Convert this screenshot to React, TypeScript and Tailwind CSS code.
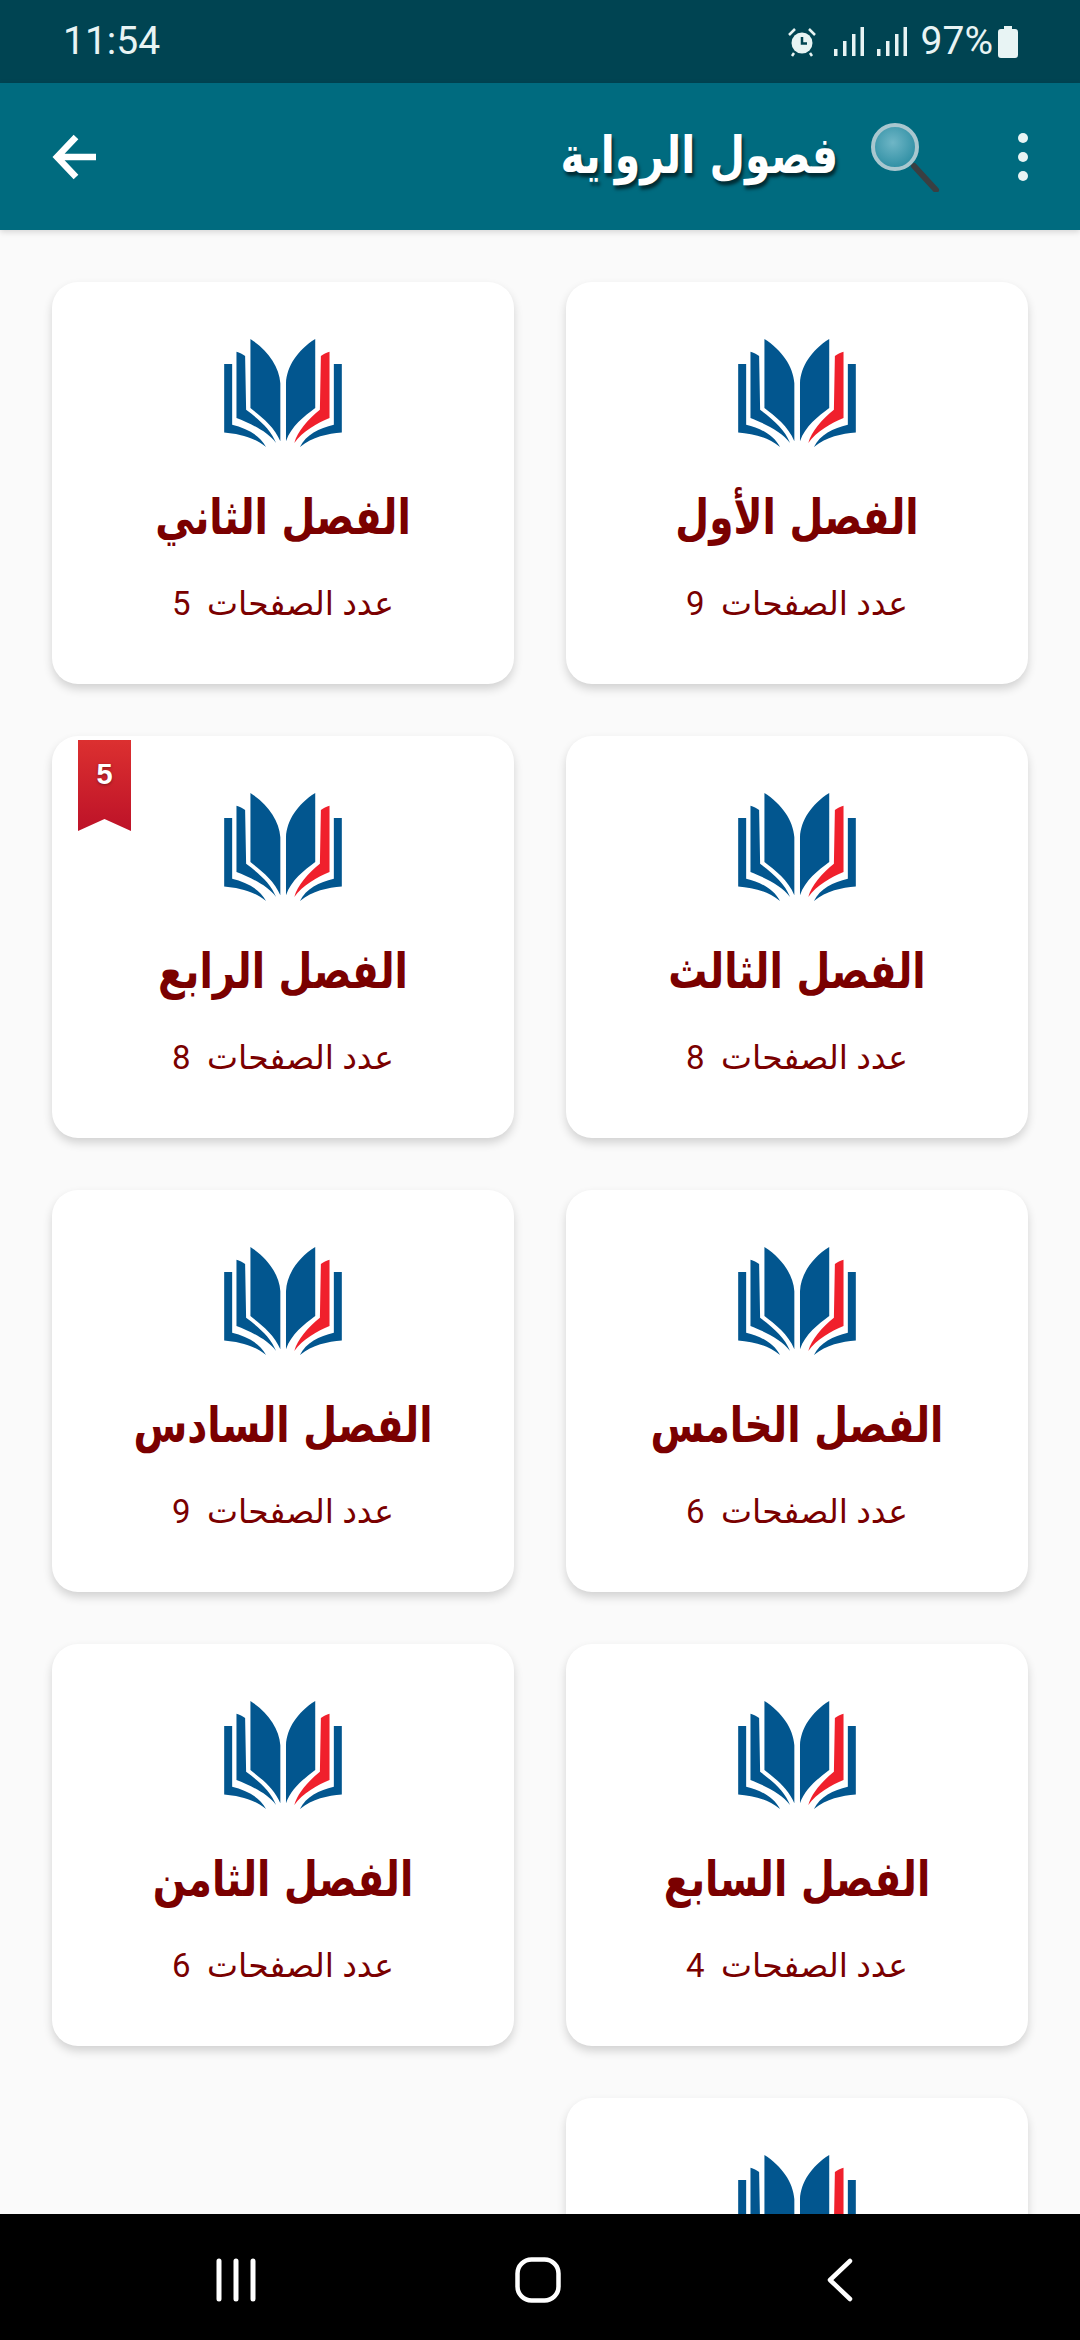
const chapters = [
  { title: "الفصل الأول", pages: 9 },
  { title: "الفصل الثاني", pages: 5 },
  { title: "الفصل الثالث", pages: 8 },
  { title: "الفصل الرابع", pages: 8, mark: 5 },
  { title: "الفصل الخامس", pages: 6 },
  { title: "الفصل السادس", pages: 9 },
  { title: "الفصل السابع", pages: 4 },
  { title: "الفصل الثامن", pages: 6 },
  { title: "الفصل التاسع", pages: 7 },
];

function BookLogo() {
  return (
    <svg viewBox="84 57 354 325" className="h-[108px] w-[118px]" fill="#02568f">
      <path d="M163 57C215 90 250 140 253 190L253 365C235 320 195 290 163 265Z" />
      <path d="M358 57C305 90 272 140 270 190L270 365C285 320 325 290 358 265Z" />
      <path d="M121 95C130 97 140 102 147 108L150 270C190 300 225 330 240 370C215 335 160 310 121 295Z" />
      <path d="M401 95C392 97 382 102 375 108L372 270C335 300 305 335 295 370C320 335 365 310 401 295Z" fill="#f0202c" />
      <path d="M84 132L108 132L108 315C150 325 190 345 210 382C170 350 125 342 84 338Z" />
      <path d="M438 132L414 132L414 315C370 325 330 345 312 382C350 350 395 342 438 338Z" />
    </svg>
  );
}

function Ribbon({ value }: { value: number }) {
  return (
    <div className="absolute left-[26px] top-[4px] h-[91px] w-[53px]">
      <svg viewBox="0 0 53 91" className="absolute inset-0 h-full w-full">
        <defs>
          <linearGradient id="ribbon" x1="0" y1="0" x2="0" y2="1">
            <stop offset="0" stopColor="#dc3030" />
            <stop offset="1" stopColor="#bd1228" />
          </linearGradient>
        </defs>
        <path d="M0 0H53V91L26.5 79L0 91Z" fill="url(#ribbon)" />
      </svg>
      <span className="absolute inset-x-0 top-[16px] text-center font-['Liberation_Sans',sans-serif] text-[29px] font-bold leading-[36px] text-white [text-shadow:0_1px_3px_rgba(0,0,0,0.4)]">
        {value}
      </span>
    </div>
  );
}

function ChapterCard({ title, pages, mark }: { title: string; pages: number; mark?: number }) {
  return (
    <div className="relative flex h-[402px] flex-col items-center rounded-[26px] bg-white pt-[57px] shadow-[0_5px_10px_rgba(0,0,0,0.16)]">
      {mark ? <Ribbon value={mark} /> : null}
      <BookLogo />
      <div className="mt-[35px] h-[72px] origin-center scale-y-125 whitespace-nowrap font-['DejaVu_Sans',sans-serif] text-[39px] font-bold leading-[72px] text-[#7a0000]">
        {title}
      </div>
      <div className="mt-[30px] whitespace-pre font-['Roboto','DejaVu_Sans',sans-serif] text-[33px] leading-[40px] text-[#7a0000]">
        {"عدد الصفحات  " + pages}
      </div>
    </div>
  );
}

function SignalBars({ className }: { className: string }) {
  return (
    <svg viewBox="0 0 30 30" className={className} fill="#e8f4f4">
      <rect x="0" y="22" width="3.5" height="7" />
      <rect x="9" y="14" width="3.5" height="15" />
      <rect x="18" y="7" width="3.5" height="22" />
      <rect x="26.5" y="0" width="3.5" height="29" />
    </svg>
  );
}

function StatusBar() {
  return (
    <div className="flex h-[83px] shrink-0 items-center justify-between bg-[#004452] pl-[63px] pr-[62px] font-['Roboto',sans-serif] text-[#e8f4f4]">
      <span className="text-[39px] leading-none">11:54</span>
      <div className="flex items-center">
        <svg viewBox="0 0 30 30" className="h-[30px] w-[30px]" fill="none" stroke="#e8f4f4">
          <circle cx="15" cy="16" r="10.5" fill="#e8f4f4" stroke="none" />
          <path d="M15 10V16.5H20" stroke="#004452" strokeWidth="2.5" />
          <path d="M2 8L8 2M28 8L22 2M7 26L5 29M23 26L25 29" strokeWidth="2.5" />
        </svg>
        <SignalBars className="ml-[17px] h-[30px] w-[30px]" />
        <SignalBars className="ml-[13px] h-[30px] w-[30px]" />
        <span className="ml-[14px] text-[39px] leading-none">97%</span>
        <svg viewBox="0 0 20 32" className="ml-[5px] h-[32px] w-[20px]" fill="#e8f4f4">
          <path d="M6 0H14V3H17Q20 3 20 6V29Q20 32 17 32H3Q0 32 0 29V6Q0 3 3 3H6Z" />
        </svg>
      </div>
    </div>
  );
}

function AppBar() {
  return (
    <div className="relative z-10 flex h-[147px] shrink-0 items-center bg-[#006b7f] pl-[52px] pr-[52px] shadow-[0_2px_6px_rgba(0,0,0,0.15)]">
      <svg viewBox="0 0 44 46" className="h-[46px] w-[44px]" fill="none" stroke="#ffffff" strokeWidth="6.5">
        <path d="M44 23H6M24 3L5 23L24 43" />
      </svg>
      <div className="ml-auto origin-center scale-y-125 whitespace-nowrap font-['DejaVu_Sans',sans-serif] text-[41px] font-bold leading-none text-white [text-shadow:2px_3px_3px_rgba(0,0,0,0.6)]" dir="rtl">
        فصول الرواية
      </div>
      <svg viewBox="0 0 70 70" className="ml-[32px] h-[70px] w-[70px]">
        <defs>
          <radialGradient id="lens" cx="0.45" cy="0.4" r="0.6">
            <stop offset="0" stopColor="#6fb6c6" />
            <stop offset="1" stopColor="#2e8ea3" />
          </radialGradient>
        </defs>
        <path d="M44 44L66 68" stroke="#3a3f42" strokeWidth="6" strokeLinecap="round" />
        <circle cx="25" cy="25" r="22" fill="url(#lens)" stroke="#a9c7cf" strokeWidth="4" />
      </svg>
      <div className="ml-[78px] flex flex-col gap-[9px]">
        <span className="h-[10px] w-[10px] rounded-full bg-[#e8f4f4]" />
        <span className="h-[10px] w-[10px] rounded-full bg-[#e8f4f4]" />
        <span className="h-[10px] w-[10px] rounded-full bg-[#e8f4f4]" />
      </div>
    </div>
  );
}

function NavBar() {
  return (
    <div className="flex h-[126px] shrink-0 items-center bg-black pl-[216px] pt-[5px]">
      <svg viewBox="0 0 40 44" className="h-[44px] w-[40px]" stroke="#ffffff" strokeWidth="5" strokeLinecap="round">
        <path d="M3 3V41M20 3V41M37 3V41" />
      </svg>
      <svg viewBox="0 0 46 46" className="ml-[259px] h-[46px] w-[46px]" fill="none" stroke="#ffffff" strokeWidth="4.5">
        <rect x="2.5" y="2.5" width="41" height="41" rx="14" />
      </svg>
      <svg viewBox="0 0 26 44" className="ml-[266px] h-[44px] w-[26px]" fill="none" stroke="#ffffff" strokeWidth="4.5" strokeLinecap="round" strokeLinejoin="round">
        <path d="M23 3L3 22L23 41" />
      </svg>
    </div>
  );
}

export default function App() {
  return (
    <div className="flex h-[2340px] w-[1080px] flex-col overflow-hidden bg-[#fafafa]">
      <StatusBar />
      <AppBar />
      <div className="min-h-0 flex-1 overflow-hidden">
        <div dir="rtl" className="grid grid-cols-2 gap-x-[52px] gap-y-[52px] px-[52px] pt-[52px]">
          {chapters.map((c) => (
            <ChapterCard key={c.title} title={c.title} pages={c.pages} mark={c.mark} />
          ))}
        </div>
      </div>
      <NavBar />
    </div>
  );
}
